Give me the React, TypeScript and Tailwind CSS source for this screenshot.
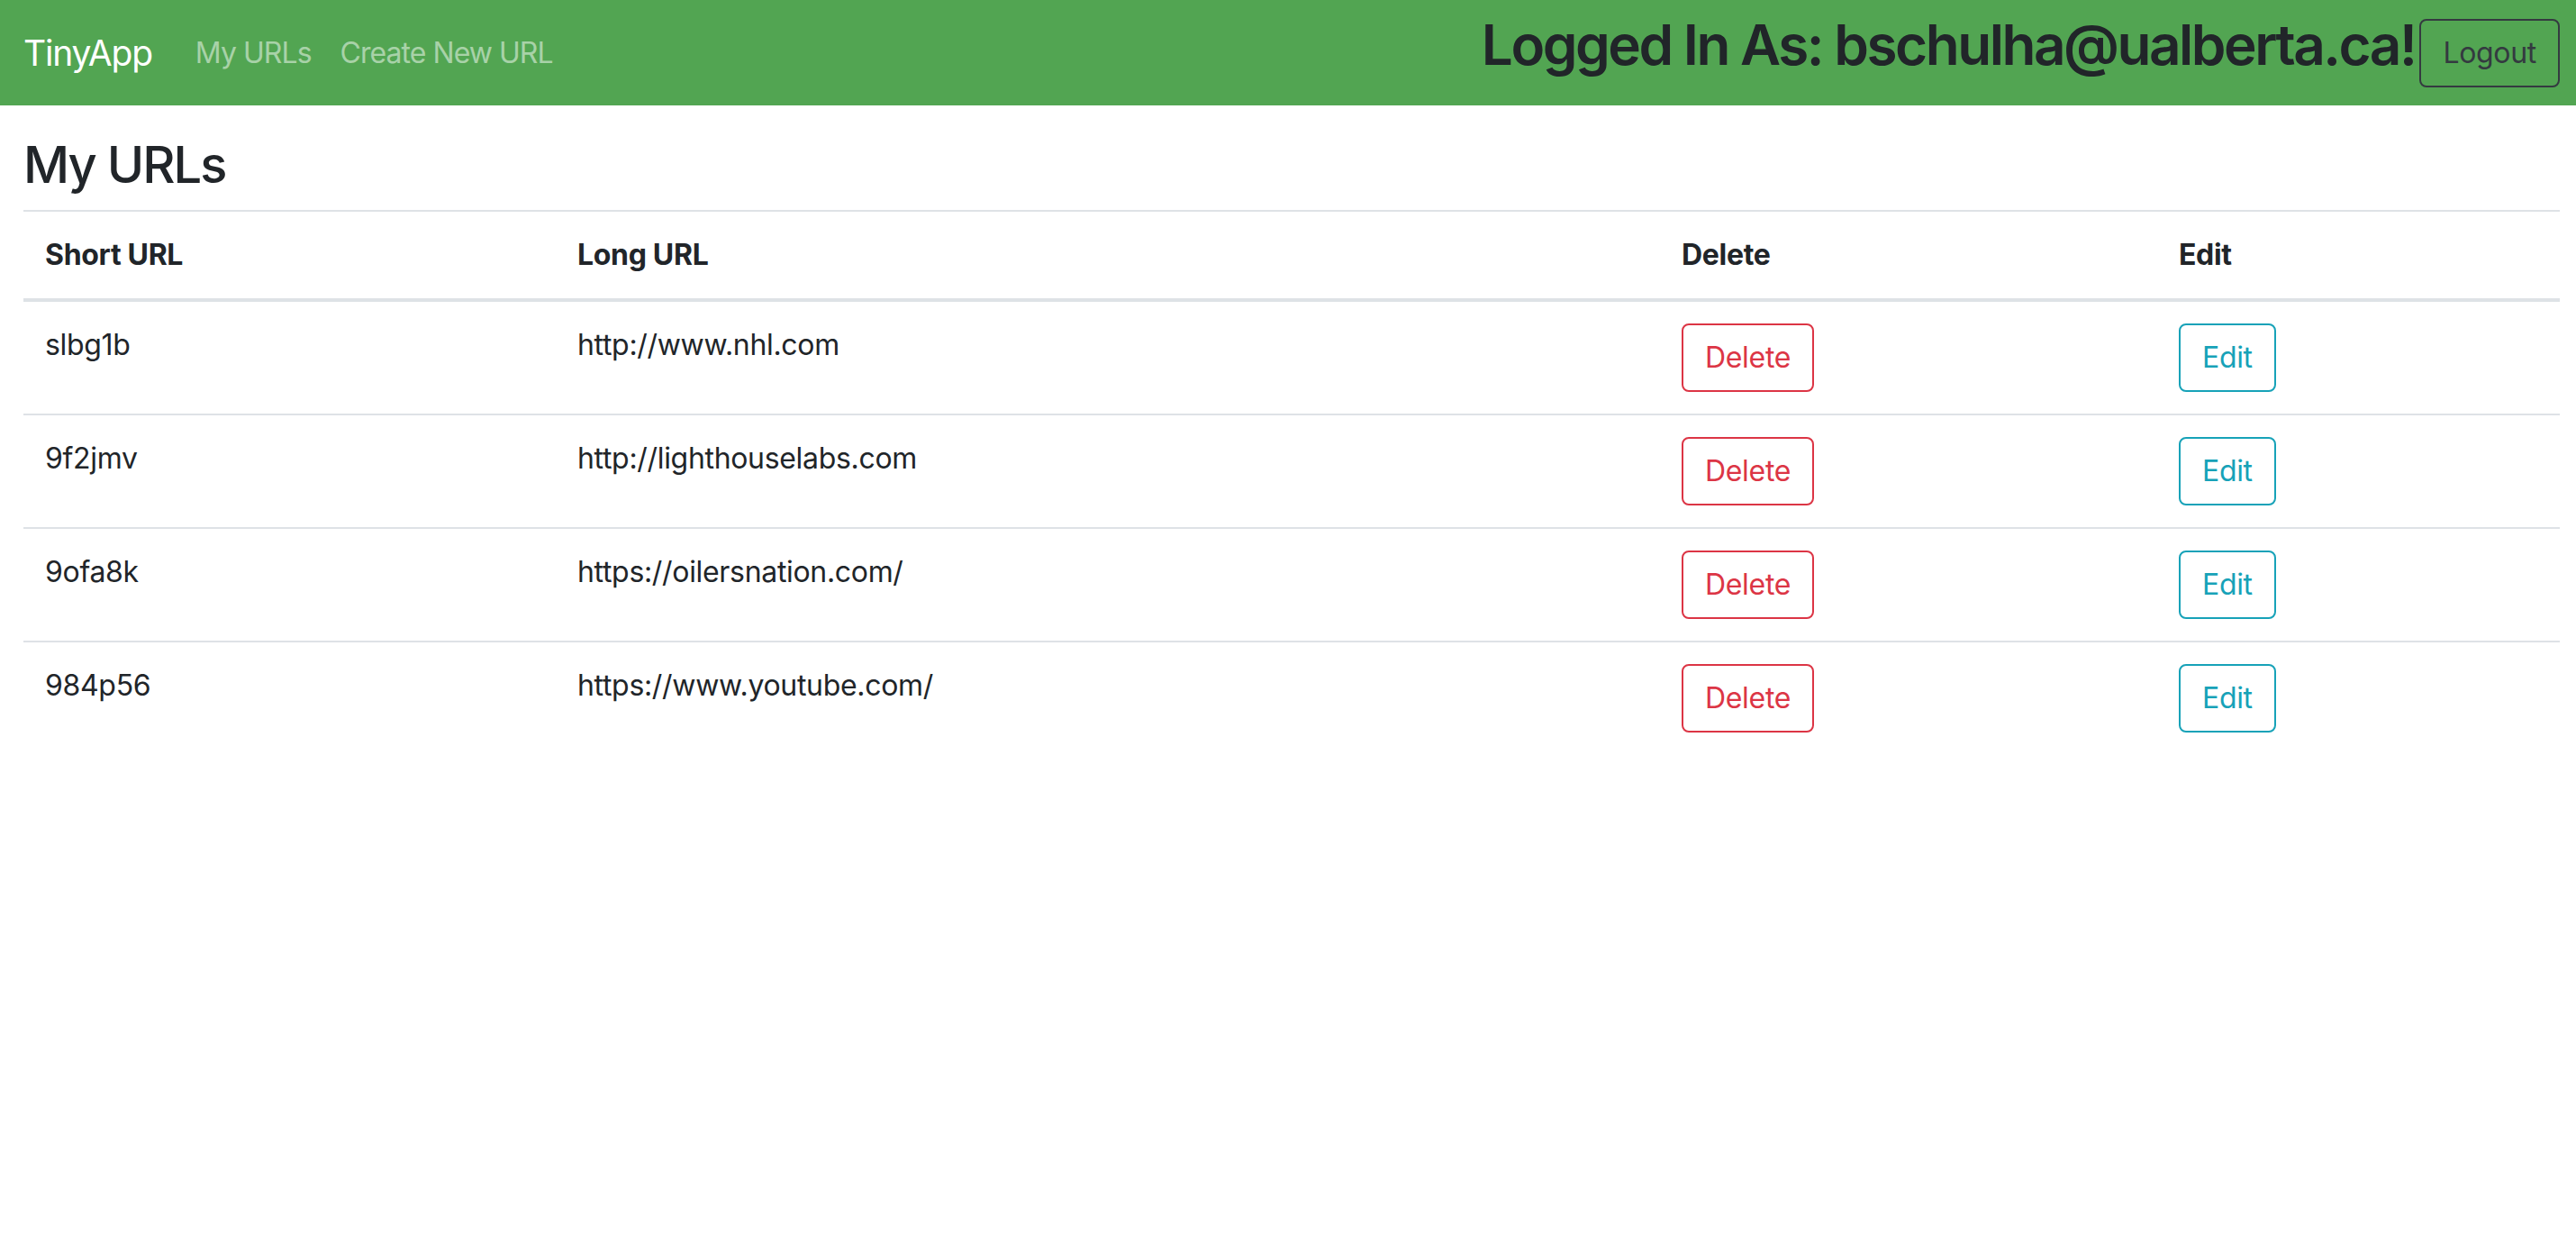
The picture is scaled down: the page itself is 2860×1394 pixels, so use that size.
import React from 'react';

type UrlRow = { short: string; long: string };

const urls: UrlRow[] = [
  { short: 'slbg1b', long: 'http://www.nhl.com' },
  { short: '9f2jmv', long: 'http://lighthouselabs.com' },
  { short: '9ofa8k', long: 'https://oilersnation.com/' },
  { short: '984p56', long: 'https://www.youtube.com/' },
];

const Header: React.FC = () => (
  <nav className="flex items-center h-[117px] bg-[#52a552] pl-[26px] pr-[18px]">
    <a href="#" className="text-[39px] leading-[60px] tracking-[-0.03em] text-white mr-[32px]">TinyApp</a>
    <a href="#" className="px-[16px] text-[32px] leading-[48px] tracking-[-0.03em] text-white/50">My URLs</a>
    <a href="#" className="px-[16px] text-[32px] leading-[48px] tracking-[-0.03em] text-white/50">Create New URL</a>
    <h1 className="ml-auto mb-[16px] text-[62px] leading-[1.2] font-semibold tracking-[-0.04em] text-[#212529]">
      Logged In As: bschulha@ualberta.ca!
    </h1>
    <button className="ml-[5px] px-[24px] py-[12px] text-[32px] leading-[48px] text-[#343a40] border-2 border-[#343a40] rounded-[8px]">
      Logout
    </button>
  </nav>
);

const App: React.FC = () => {
  return (
    <div className="min-h-screen bg-white text-[#212529] tracking-[-0.02em] font-['Inter','Liberation_Sans',sans-serif]">
      <Header />
      <main className="pl-[26px] pr-[18px]">
        <h2 className="mt-[33px] mb-[16px] text-[56px] leading-[1.2] font-medium tracking-[-0.035em]">My URLs</h2>
        <table className="w-full table-fixed border-collapse border-t-2 border-[#dee2e6] text-[32px] leading-[48px]">
          <thead>
            <tr className="border-b-4 border-[#dee2e6]">
              <th className="w-[591px] p-[24px] text-left font-bold">Short URL</th>
              <th className="w-[1226px] p-[24px] text-left font-bold">Long URL</th>
              <th className="w-[552px] p-[24px] text-left font-bold">Delete</th>
              <th className="p-[24px] text-left font-bold">Edit</th>
            </tr>
          </thead>
          <tbody>
            {urls.map((u, i) => (
              <tr key={u.short} className={i > 0 ? 'border-t-2 border-[#dee2e6]' : ''}>
                <td className="p-[24px] align-top">{u.short}</td>
                <td className="p-[24px] align-top">{u.long}</td>
                <td className="p-[24px] align-top">
                  <button className="px-[24px] py-[12px] leading-[48px] text-[#dc3545] border-2 border-[#dc3545] rounded-[8px]">
                    Delete
                  </button>
                </td>
                <td className="p-[24px] align-top">
                  <button className="px-[24px] py-[12px] leading-[48px] text-[#17a2b8] border-2 border-[#17a2b8] rounded-[8px]">
                    Edit
                  </button>
                </td>
              </tr>
            ))}
          </tbody>
        </table>
      </main>
    </div>
  );
};

export default App;
